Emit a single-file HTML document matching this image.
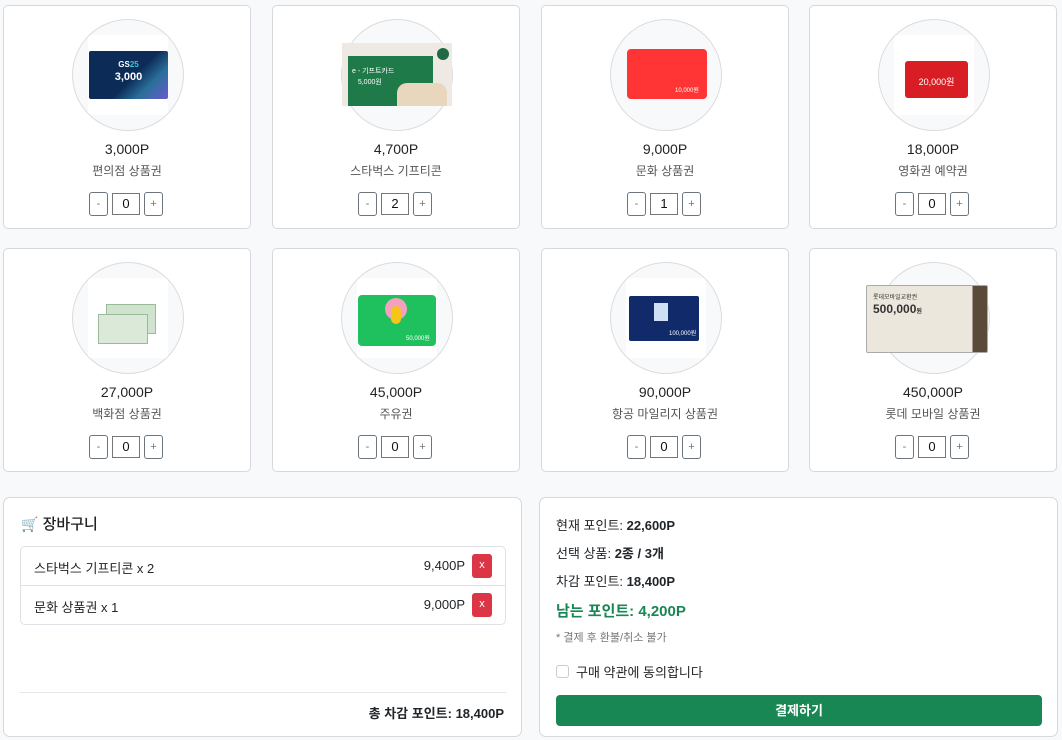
<!DOCTYPE html>
<html><head><meta charset="utf-8"><style>
*{box-sizing:border-box;margin:0;padding:0}
body{width:1062px;height:740px;background:#f8f9fa;font-family:"Liberation Sans","Noto Sans CJK KR",sans-serif;position:relative;overflow:hidden;color:#212529}
.card{position:absolute;width:248px;height:224px;background:#fff;border:1px solid #d6d8db;border-radius:5px}
.circ{position:absolute;left:68px;top:13px;width:112px;height:112px;border-radius:50%;border:1px solid #dcdcdc;background:#f8f9fa;overflow:hidden}
.img{position:absolute;left:15px;top:15px;width:80px;height:80px;background:#fff}
.price{position:absolute;top:135px;width:100%;text-align:center;font-size:14px;color:#222}
.name{position:absolute;top:156px;width:100%;text-align:center;font-size:12px;color:#555}
.ctl{position:absolute;top:186px;left:85px;width:78px;height:24px}
.b{position:absolute;top:0;width:19px;height:24px;border:1px solid #6c757d;border-radius:3px;font-size:11px;color:#6c757d;text-align:center;line-height:22px}
.in{position:absolute;left:23px;top:1px;width:28px;height:22px;border:1px solid #767676;font-size:13px;text-align:center;line-height:20px;color:#111}
.panel{position:absolute;top:497px;height:240px;background:#fff;border:1px solid #d6d8db;border-radius:7px}
.t{position:absolute;left:16px;font-size:13px;color:#212529}
.t b{font-weight:bold}
</style></head><body>

<!-- row1 -->
<div class="card" style="left:3px;top:5px">
 <div class="circ"><div class="img"><div style="position:absolute;left:1px;top:16px;width:79px;height:48px;background:linear-gradient(135deg,#0d2b57 55%,#2a6f9a 75%,#6a5acd);border-radius:2px;color:#fff;text-align:center;font-size:8px;font-weight:bold;line-height:12px;padding-top:8px">GS<span style="color:#3cd">25</span><br><span style="font-size:11px">3,000</span></div></div></div>
 <div class="price">3,000P</div><div class="name">편의점 상품권</div>
 <div class="ctl"><div class="b" style="left:0">-</div><div class="in">0</div><div class="b" style="left:55px">+</div></div>
</div>
<div class="card" style="left:272px;top:5px">
 <div class="circ" style="overflow:visible"><div style="position:absolute;left:0px;top:23px;width:110px;height:63px;background:#efe9e4"><div style="position:absolute;left:6px;top:13px;width:85px;height:50px;background:#1f7a4a;color:#fff;font-size:7px;line-height:11px;padding:10px 0 0 4px">e - 기프트카드<br>&nbsp;&nbsp;&nbsp;5,000원</div><div style="position:absolute;left:55px;top:40px;width:50px;height:23px;background:#e8d6bd;border-radius:10px 10px 0 0"></div><div style="position:absolute;left:95px;top:5px;width:12px;height:12px;border-radius:50%;background:#1f6a44"></div></div></div>
 <div class="price">4,700P</div><div class="name">스타벅스 기프티콘</div>
 <div class="ctl"><div class="b" style="left:0">-</div><div class="in">2</div><div class="b" style="left:55px">+</div></div>
</div>
<div class="card" style="left:541px;top:5px">
 <div class="circ"><div class="img" style="background:#f8f9fa"><div style="position:absolute;left:1px;top:14px;width:80px;height:50px;background:#ff3535;border-radius:4px;color:#fff;font-size:6px;padding:36px 0 0 48px">10,000원</div></div></div>
 <div class="price">9,000P</div><div class="name">문화 상품권</div>
 <div class="ctl"><div class="b" style="left:0">-</div><div class="in">1</div><div class="b" style="left:55px">+</div></div>
</div>
<div class="card" style="left:809px;top:5px">
 <div class="circ"><div class="img"><div style="position:absolute;left:11px;top:26px;width:63px;height:37px;background:#d81e24;border-radius:3px;color:#fff;font-size:9px;text-align:center;padding-top:14px">20,000원</div></div></div>
 <div class="price">18,000P</div><div class="name">영화권 예약권</div>
 <div class="ctl"><div class="b" style="left:0">-</div><div class="in">0</div><div class="b" style="left:55px">+</div></div>
</div>

<!-- row2 -->
<div class="card" style="left:3px;top:248px">
 <div class="circ"><div class="img"><div style="position:absolute;left:18px;top:26px;width:50px;height:30px;background:#cfe3cf;border:1px solid #9b9"></div><div style="position:absolute;left:10px;top:36px;width:50px;height:30px;background:#dbead8;border:1px solid #9b9"></div></div></div>
 <div class="price">27,000P</div><div class="name">백화점 상품권</div>
 <div class="ctl"><div class="b" style="left:0">-</div><div class="in">0</div><div class="b" style="left:55px">+</div></div>
</div>
<div class="card" style="left:272px;top:248px">
 <div class="circ"><div class="img"><div style="position:absolute;left:1px;top:17px;width:78px;height:51px;background:#1fc15e;border-radius:4px;color:#fff;font-size:6px;padding:38px 0 0 48px">50,000원</div><div style="position:absolute;left:28px;top:20px;width:22px;height:22px;border-radius:50%;background:#f4a0c0"></div><div style="position:absolute;left:34px;top:28px;width:10px;height:18px;background:#f5c518;border-radius:5px"></div></div></div>
 <div class="price">45,000P</div><div class="name">주유권</div>
 <div class="ctl"><div class="b" style="left:0">-</div><div class="in">0</div><div class="b" style="left:55px">+</div></div>
</div>
<div class="card" style="left:541px;top:248px">
 <div class="circ"><div class="img"><div style="position:absolute;left:3px;top:18px;width:70px;height:45px;background:#102a6a;border-radius:2px;color:#fff;font-size:6px;padding:32px 0 0 40px">100,000원</div><div style="position:absolute;left:28px;top:25px;width:14px;height:18px;background:#cfe0f5"></div></div></div>
 <div class="price">90,000P</div><div class="name">항공 마일리지 상품권</div>
 <div class="ctl"><div class="b" style="left:0">-</div><div class="in">0</div><div class="b" style="left:55px">+</div></div>
</div>
<div class="card" style="left:809px;top:248px">
 <div class="circ" style="overflow:visible"><div style="position:absolute;left:-13px;top:22px;width:122px;height:68px;background:linear-gradient(90deg,#ece7dc 88%,#5a4a38 88%);border:1px solid #aaa;border-radius:2px;color:#333;font-size:12px;font-weight:bold;padding:16px 0 0 6px"><span style="font-size:6px;font-weight:normal;position:absolute;top:6px">롯데모바일교환권</span>500,000<span style="font-size:6px">원</span></div></div>
 <div class="price">450,000P</div><div class="name">롯데 모바일 상품권</div>
 <div class="ctl"><div class="b" style="left:0">-</div><div class="in">0</div><div class="b" style="left:55px">+</div></div>
</div>

<!-- cart -->
<div class="panel" style="left:3px;width:519px">
 <div style="position:absolute;left:17px;top:15px;font-size:15px;font-weight:500;color:#222"><span style="font-size:14px;color:#6b7fa8">🛒</span> 장바구니</div>
 <div style="position:absolute;left:16px;top:48px;width:486px;height:79px;border:1px solid #dee2e6;border-radius:5px">
  <div style="position:absolute;left:0;top:0;width:100%;height:39px;border-bottom:1px solid #dee2e6;font-size:13px">
   <span style="position:absolute;left:13px;top:11px">스타벅스 기프티콘 x 2</span>
   <span style="position:absolute;right:40px;top:11px">9,400P</span>
   <span style="position:absolute;right:13px;top:7px;width:20px;height:24px;background:#dc3545;border-radius:3px;color:#fff;font-size:11px;text-align:center;line-height:23px">x</span>
  </div>
  <div style="position:absolute;left:0;top:39px;width:100%;height:39px;font-size:13px">
   <span style="position:absolute;left:13px;top:11px">문화 상품권 x 1</span>
   <span style="position:absolute;right:40px;top:11px">9,000P</span>
   <span style="position:absolute;right:13px;top:7px;width:20px;height:24px;background:#dc3545;border-radius:3px;color:#fff;font-size:11px;text-align:center;line-height:23px">x</span>
  </div>
 </div>
 <div style="position:absolute;left:16px;top:194px;width:486px;border-top:1px solid #e5e7ea"></div>
 <div style="position:absolute;right:17px;top:205px;font-size:13px;font-weight:bold">총 차감 포인트: 18,400P</div>
</div>

<!-- summary -->
<div class="panel" style="left:539px;width:519px">
 <div class="t" style="top:17px">현재 포인트: <b>22,600P</b></div>
 <div class="t" style="top:45px">선택 상품: <b>2종 / 3개</b></div>
 <div class="t" style="top:73px">차감 포인트: <b>18,400P</b></div>
 <div class="t" style="top:102px;font-size:15px;font-weight:bold;color:#198754">남는 포인트: 4,200P</div>
 <div class="t" style="top:131px;font-size:11px;color:#777">* 결제 후 환불/취소 불가</div>
 <div style="position:absolute;left:16px;top:167px;width:13px;height:13px;border:1px solid #ccc;border-radius:3px"></div>
 <div class="t" style="top:164px;left:36px">구매 약관에 동의합니다</div>
 <div style="position:absolute;left:16px;top:197px;width:486px;height:31px;background:#198754;border-radius:4px;color:#fff;font-size:13px;font-weight:bold;text-align:center;line-height:31px">결제하기</div>
</div>
</body></html>
